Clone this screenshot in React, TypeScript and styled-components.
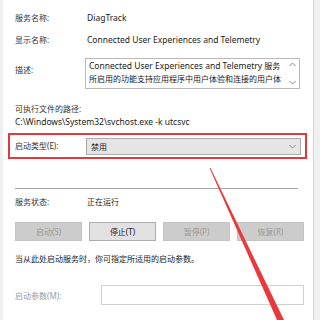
import React from 'react';
import styled, { createGlobalStyle } from 'styled-components';

const GlobalStyle = createGlobalStyle`
  html, body {
    margin: 0;
    padding: 0;
    width: 320px;
    height: 320px;
    overflow: hidden;
    background: #f0f0f0;
  }
  * {
    box-sizing: border-box;
  }
`;

const FONT = `"Noto Sans", "Noto Sans CJK SC", sans-serif`;

const Chevron = ({ dir }: { dir: 'up' | 'down' }) => (
  <svg width="7" height="5" viewBox="0 0 7 5">
    <path
      d={dir === 'down' ? 'M0.5 1 L3.5 4 L6.5 1' : 'M0.5 4 L3.5 1 L6.5 4'}
      fill="none"
      stroke="#8a8a8a"
      strokeWidth="1"
    />
  </svg>
);

const App = () => {
  return (
    <Window>
      <GlobalStyle />
      <Panel>
        <Row $top={12}>
          <Label>服务名称:</Label>
          <Value>
            <En>DiagTrack</En>
          </Value>
        </Row>
        <Row $top={10}>
          <Label>显示名称:</Label>
          <Value>
            <En>Connected User Experiences and Telemetry</En>
          </Value>
        </Row>
        <DescRow>
          <Label $pad={6}>描述:</Label>
          <TextArea>
            <TextBody>
              <div>
                <En>Connected User Experiences and Telemetry</En> 服务
              </div>
              <div>所启用的功能支持应用程序中用户体验和连接的用户体</div>
            </TextBody>
            <ScrollBar>
              <Chevron dir="up" />
              <Chevron dir="down" />
            </ScrollBar>
          </TextArea>
        </DescRow>
        <Line $top={14}>可执行文件的路径:</Line>
        <Line $top={1} $dark>
          <En>C:\Windows\System32\svchost.exe -k utcsvc</En>
        </Line>
        <Highlight>
          <InnerLabel>启动类型(E):</InnerLabel>
          <Select>
            <span>禁用</span>
            <Chevron dir="down" />
          </Select>
        </Highlight>
        <Divider />
        <Row $top={7}>
          <Label>服务状态:</Label>
          <Value>正在运行</Value>
        </Row>
        <Buttons>
          <Button disabled>启动(S)</Button>
          <Button>停止(T)</Button>
          <Button disabled>暂停(P)</Button>
          <Button disabled>恢复(R)</Button>
        </Buttons>
        <Line $top={12} $dark>
          当从此处启动服务时，你可指定所适用的启动参数。
        </Line>
        <ParamRow>
          <ParamLabel>启动参数(M):</ParamLabel>
          <Input />
        </ParamRow>
      </Panel>
      <Side />
      <Arrow width="320" height="320" viewBox="0 0 320 320">
        <polygon points="209.5,168 210.5,168 284,320 277,320" fill="#e8393d" />
      </Arrow>
    </Window>
  );
};

export default App;

const Window = styled.div`
  position: relative;
  display: flex;
  width: 320px;
  height: 320px;
  font-family: ${FONT};
  font-size: 8px;
  color: #1e1e1e;
`;

const En = styled.span`
  font-size: 8.5px;
`;

const Panel = styled.div`
  width: 311px;
  height: 320px;
  margin-left: 3px;
  background: #ffffff;
  border-right: 1px solid #d6d6d6;
  display: flex;
  flex-direction: column;
`;

const Side = styled.div`
  flex: 1;
  background: #f0f0f0;
`;

const Row = styled.div<{ $top: number }>`
  display: grid;
  grid-template-columns: 72px 1fr;
  align-items: start;
  padding: 0 12px;
  margin-top: ${(p) => p.$top}px;
  line-height: 12px;
`;

const Label = styled.div<{ $pad?: number }>`
  color: #333;
  padding-top: ${(p) => p.$pad || 0}px;
  white-space: nowrap;
`;

const Value = styled.div`
  color: #1a1a1a;
  white-space: nowrap;
`;

const DescRow = styled(Row).attrs({ $top: 12 })`
  line-height: 12px;
`;

const TextArea = styled.div`
  display: flex;
  margin-left: -2px;
  width: 215px;
  height: 31px;
  border: 1px solid #b9b9b9;
  background: #fff;
`;

const TextBody = styled.div`
  flex: 1;
  padding: 0 0 0 3px;
  line-height: 13px;
  white-space: nowrap;
  overflow: hidden;
  color: #1a1a1a;
`;

const ScrollBar = styled.div`
  width: 13px;
  display: flex;
  flex-direction: column;
  justify-content: space-between;
  align-items: center;
  padding: 3px 0 3px;
`;

const Line = styled.div<{ $top: number; $dark?: boolean }>`
  padding: 0 12px;
  margin-top: ${(p) => p.$top}px;
  line-height: 12px;
  color: ${(p) => (p.$dark ? '#1a1a1a' : '#333')};
  white-space: nowrap;
`;

const Highlight = styled.div`
  display: flex;
  align-items: center;
  margin: 5px 6px 0 5px;
  height: 26px;
  border: 2px solid #e2383e;
  padding: 0 4px 0 5px;
`;

const InnerLabel = styled.div`
  width: 71px;
  color: #333;
  white-space: nowrap;
  line-height: 12px;
`;

const Select = styled.div`
  flex: 1;
  height: 17px;
  display: flex;
  align-items: center;
  justify-content: space-between;
  padding: 0 4px 0 4px;
  background: #e5e5e5;
  border: 1px solid #acacac;
  color: #1a1a1a;
`;

const Divider = styled.div`
  margin: 29px 15px 0 12px;
  height: 1px;
  background: #a8a8a8;
`;

const Buttons = styled.div`
  display: grid;
  grid-template-columns: repeat(4, 1fr);
  gap: 7px;
  margin: 14px 9px 0 12px;
`;

const Button = styled.button`
  height: 19px;
  padding: 0;
  font-family: ${FONT};
  font-size: 8px;
  border: 1px solid #adadad;
  background: #e1e1e1;
  color: #1a1a1a;

  &:disabled {
    background: #cccccc;
    border-color: #c4c4c4;
    color: #9a9a9a;
  }
`;

const ParamRow = styled.div`
  display: flex;
  align-items: center;
  margin: 20px 9px 0 12px;
`;

const ParamLabel = styled.div`
  width: 86px;
  color: #9a9a9a;
  white-space: nowrap;
`;

const Input = styled.div`
  flex: 1;
  height: 20px;
  border: 1px solid #d0d0d0;
  background: #fff;
`;

const Arrow = styled.svg`
  position: absolute;
  left: 0;
  top: 0;
  pointer-events: none;
`;
